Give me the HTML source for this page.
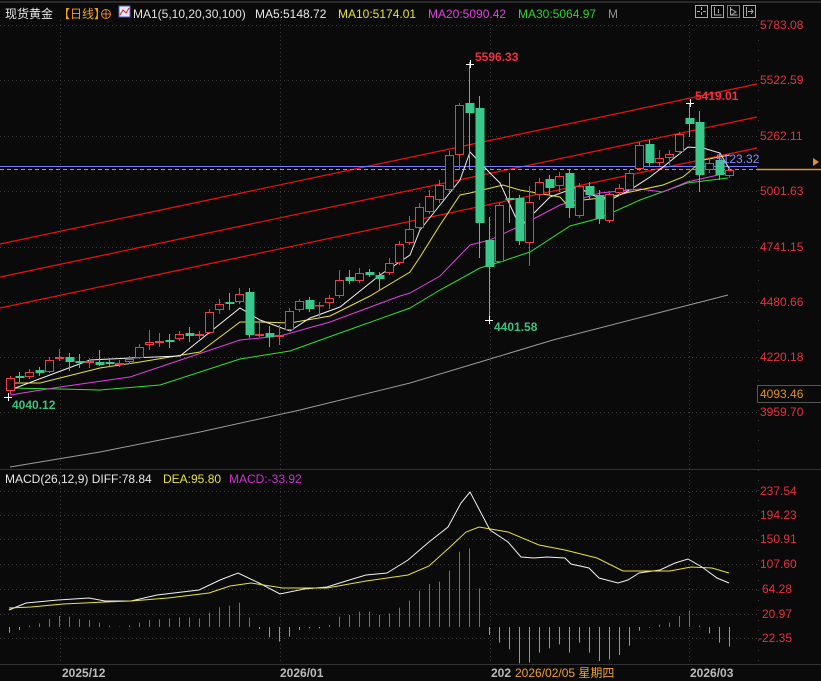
<!DOCTYPE html>
<html><head><meta charset="utf-8">
<style>
html,body{margin:0;padding:0;background:#0a0a0a;width:821px;height:681px;overflow:hidden}
svg{display:block}
text{font-family:"Liberation Sans","Noto Sans CJK SC",sans-serif;font-size:12px}
</style></head><body>
<svg id="s" width="821" height="681" xmlns="http://www.w3.org/2000/svg">
<rect width="821" height="681" fill="#0a0a0a"/>
<line x1="0" y1="2" x2="821" y2="2" stroke="#2a2a2a" stroke-width="2"/>
<g id="grid" stroke="#3a3a3a" stroke-dasharray="1,3" stroke-width="1"></g>
<line x1="0" y1="469.5" x2="821" y2="469.5" stroke="#333" stroke-width="1"/>
<line x1="0" y1="664.5" x2="821" y2="664.5" stroke="#333" stroke-width="1"/>
<line x1="758.5" y1="20" x2="758.5" y2="664" stroke="#3a3a3a" stroke-dasharray="1,9"/>
<g id="chan" stroke="#f01010" stroke-width="1.2"></g>
<line x1="0" y1="166.5" x2="757" y2="166.5" stroke="#7a7aff" stroke-width="1"/>
<line x1="0" y1="169.5" x2="757" y2="169.5" stroke="#e09030" stroke-dasharray="4,3" stroke-width="1"/>
<line x1="757" y1="169.5" x2="821" y2="169.5" stroke="#e09030" stroke-width="1.5"/>
<g id="ma"></g>
<g id="candles"></g>
<g id="macd"></g>
<text x="5" y="18" fill="#e8e8e8" font-size="13">现货黄金</text>
<text x="58" y="18" fill="#f0a020" font-size="13">【日线】</text>
<circle cx="106" cy="14" r="4.5" fill="none" stroke="#e0802a" stroke-width="1"/>
<line x1="101" y1="14" x2="111" y2="14" stroke="#e0802a"/><line x1="106" y1="9" x2="106" y2="19" stroke="#e0802a"/>
<rect x="119" y="6" width="11" height="11" fill="#e8e8f8" stroke="#5060c0"/>
<polyline points="120,15 123,10 126,13 129,8" fill="none" stroke="#d02020"/>
<text x="133" y="18" fill="#e0e0e0" font-size="13">MA1(5,10,20,30,100)</text>
<text x="255" y="18" fill="#e8e8e8" font-size="13">MA5:5148.72</text>
<text x="338" y="18" fill="#e8e040" font-size="13">MA10:5174.01</text>
<text x="428" y="18" fill="#e040e0" font-size="13">MA20:5090.42</text>
<text x="518" y="18" fill="#30d030" font-size="13">MA30:5064.97</text>
<text x="608" y="18" fill="#909090" font-size="13">M</text>
<g fill="none" stroke="#aaa">
<rect x="695.5" y="5.5" width="12" height="12"/><rect x="711.5" y="5.5" width="12" height="12"/><rect x="727.5" y="5.5" width="12" height="12" stroke="#3a8ae0"/><rect x="743.5" y="5.5" width="12" height="12"/>
<path d="M701.5 7v3M701.5 12v3M697 11.5h3M703 11.5h3M714.5 7v8h7M718.5 9v4M730.5 7v8h7M731 9l5 3-5 3M746.5 7v9M748 11.5h5M751 9l2 2.5-2 2.5"/>
</g>
<g fill="#e8303c" font-size="12">
<text x="760" y="29">5783.08</text><text x="760" y="84">5522.59</text><text x="760" y="140">5262.11</text>
<text x="760" y="195">5001.63</text><text x="760" y="251">4741.15</text><text x="760" y="306">4480.66</text>
<text x="760" y="361">4220.18</text><text x="760" y="416">3959.70</text>
<text x="760" y="495">237.54</text><text x="760" y="519">194.23</text><text x="760" y="543">150.91</text>
<text x="760" y="568">107.60</text><text x="762" y="593">64.28</text><text x="762" y="618">20.97</text><text x="758" y="642">-22.35</text>
</g>
<rect x="757.5" y="385.5" width="64" height="17" fill="#0a0a0a" stroke="#555"/>
<text x="760" y="398" fill="#e0902a">4093.46</text>
<text x="716" y="163" fill="#8a8aff" font-size="12.5">5123.32</text>
<path d="M813 158l6 4-6 4z" fill="#e0902a"/>
<g stroke="#fff"><path d="M466 64.5h8M470.5 60v8M686 103.5h8M690.5 99v8M485 320.5h8M489.5 316v8M4 397.5h8M8.5 393v8"/></g>
<text x="475" y="61" fill="#f03040" font-weight="bold" font-size="12.5">5596.33</text>
<text x="695" y="100" fill="#f03040" font-weight="bold" font-size="12.5">5419.01</text>
<text x="494" y="331" fill="#40c080" font-weight="bold" font-size="12.5">4401.58</text>
<text x="12" y="409" fill="#40c080" font-weight="bold" font-size="12.5">4040.12</text>
<text x="5" y="483" fill="#e8e8e8">MACD(26,12,9) DIFF:78.84</text>
<text x="163" y="483" fill="#e8e040">DEA:95.80</text>
<text x="229" y="483" fill="#d030d0">MACD:-33.92</text>
<g fill="#bbb" font-size="12" font-weight="bold">
<text x="62" y="677">2025/12</text><text x="280" y="677">2026/01</text><text x="491" y="677">202</text><text x="690" y="677">2026/03</text>
</g>
<rect x="514" y="666" width="108" height="15" fill="#0a0a0a"/>
<text x="515" y="677" fill="#f0a030">2026/02/05 星期四</text>
</svg>
<script>
var NS="http://www.w3.org/2000/svg";
function el(p,t,a){var e=document.createElementNS(NS,t);for(var k in a)e.setAttribute(k,a[k]);document.getElementById(p).appendChild(e);return e;}
[25,80,136,191,247,302,357,412,491,515,539,564,589,614,638].forEach(function(y){el("grid","line",{x1:0,y1:y+.5,x2:757,y2:y+.5});});
[60,280,490,689].forEach(function(x){el("grid","line",{x1:x+.5,y1:20,x2:x+.5,y2:664});});
[244,277,308].forEach(function(y){el("chan","line",{x1:0,y1:y,x2:757,y2:y-160});});
function pl(p,pts,c){el(p,"polyline",{points:pts,fill:"none",stroke:c,"stroke-width":1});}
pl("ma","10,467 100,452 200,432 300,410 410,383 480,362 553,340 650,315 728,295","#9a9a9a");
pl("ma","10,388 60,389 100,390 160,385 240,359 290,351 340,333 410,308 440,290 480,268 500,262 530,252 570,226 600,218 640,200 687,183 728,178","#30e030");
pl("ma","10,395 60,387 130,377 240,340 280,336 330,322 400,296 410,293 440,276 470,245 490,240 520,226 560,205 600,193 640,189 663,192 687,182 727,173","#e040e0");
pl("ma","10,383 40,383 60,378 100,368 140,362 200,352 240,322 260,322 290,323 330,316 370,296 410,272 420,257 440,225 460,195 470,193 503,185 520,190 537,193 560,197 570,208 583,200 610,197 630,192 663,185 683,177 703,160 730,155","#e8e040");
pl("ma","10,390 50,375 90,360 130,358 180,356 240,308 260,320 290,331 310,318 340,307 380,275 410,255 420,230 440,205 460,180 470,152 490,173 500,183 520,227 537,210 550,197 577,187 597,197 610,200 630,190 650,177 663,167 688,147 703,148 720,153 730,170","#f0f0f0");
var C=[
[10,378,391,376,394,1],[19,376,378,372,382,0],[29,372,377,369,379,1],[39,370,373,367,376,0],[49,360,372,357,373,1],
[59,357,359,349,361,1],[69,357,362,353,371,0],[79,361,363,354,368,0],[89,361,363,358,368,1],[99,362,365,350,366,0],
[109,362,364,358,367,0],[119,363,365,360,367,1],[129,359,362,356,364,1],[139,347,358,344,359,1],[149,342,345,330,350,1],
[159,341,343,333,347,1],[169,340,342,334,348,0],[179,334,339,331,341,1],[189,333,336,327,342,0],[199,334,336,331,339,1],
[209,312,333,309,334,1],[219,304,310,299,314,1],[229,302,304,293,310,0],[239,294,302,288,304,1],[249,292,335,288,338,0],
[259,334,336,320,337,1],[269,333,337,326,347,0],[279,335,337,325,345,1],[289,311,330,308,331,1],[299,301,310,299,312,1],
[309,300,309,297,312,0],[319,305,306,302,318,1],[329,298,303,295,309,1],[339,280,296,270,298,1],[349,277,281,270,284,0],
[359,273,281,268,283,1],[369,272,275,269,277,0],[379,275,279,272,290,0],[389,263,273,258,275,1],[399,244,263,241,265,1],
[409,229,243,216,245,1],[419,207,228,203,230,1],[429,196,212,190,214,1],[439,185,200,180,203,1],[449,155,190,150,192,1],
[459,105,155,103,170,1],[469,103,113,62,170,0],[479,108,223,96,258,0],[489,240,267,217,320,0],[499,205,262,203,263,1],
[509,198,200,173,223,0],[519,198,241,195,245,0],[529,202,243,186,266,1],[539,182,195,178,200,1],[549,179,188,175,195,0],
[559,176,186,172,192,1],[569,173,208,170,218,0],[579,186,216,183,218,1],[589,186,195,182,200,0],[599,195,219,190,224,0],
[609,194,221,191,223,1],[619,188,193,184,196,1],[629,173,190,170,192,1],[639,145,169,142,171,1],[649,144,163,140,166,0],
[659,158,163,150,166,1],[669,154,158,150,165,1],[679,134,152,132,154,1],[689,118,124,103,137,0],[699,122,175,111,192,0],
[709,163,170,158,173,1],[719,160,175,152,180,0],[729,170,176,166,178,1]];
C.forEach(function(c){var col=c[5]?"#f03a4a":"#3cc88a";var x=c[0]+.5;
el("candles","line",{x1:x,y1:c[3],x2:x,y2:c[1],stroke:col});
el("candles","line",{x1:x,y1:c[2],x2:x,y2:c[4],stroke:col});
var h=Math.max(c[2]-c[1],1);
if(c[5])el("candles","rect",{x:c[0]-3.5,y:c[1]+.5,width:8,height:Math.max(h-1,0.5),fill:"#0a0a0a",stroke:col});
else el("candles","rect",{x:c[0]-3.5,y:c[1],width:9,height:h,fill:col});});
var H=[518,510,497,490,477,468,470,477,480,488,497,500,497,488,480,478,475,472,472,475,458,442,437,428,473,507,532,545,530,510,505,505,495,470,465,455,455,465,460,443,422,392,372,365,332,275,265,385,525,548,568,610,608,578,565,553,578,548,578,603,598,585,557,512,503,494,488,468,452,497,520,548,560];
H.forEach(function(p,i){var x=9.5+i*10;var y=460+p/3;var up=y<627;el("macd","line",{x1:x,y1:627,x2:x,y2:y,stroke:up?"#f03a4a":"#3cc88a"});});
pl("macd","9,610 26,603 58,600 89,598 105,601 131,601 157,595 199,590 220,580 238,573 259,583 280,594 304,589 327,587 346,581 366,575 387,573 408,560 429,542 448,527 461,503 470,492 490,530 508,542 521,557 534,558 547,557 565,558 571,564 589,568 599,578 618,583 628,580 639,573 660,570 675,563 688,559 702,567 717,578 729,583","#f0f0f0");
pl("macd","9,608 31,607 63,604 105,602 131,601 168,598 209,593 230,586 251,583 283,588 327,588 366,581 408,575 429,566 450,547 466,532 479,527 508,532 539,545 565,550 597,558 623,571 670,571 691,567 712,568 729,573","#e8e040");
</script>
</body></html>
